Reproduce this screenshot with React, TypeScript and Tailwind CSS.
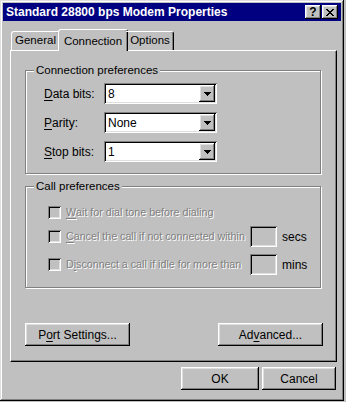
import React from "react";

const FONT = { fontFamily: '"Liberation Sans", Arial, sans-serif' };
const raised =
  "shadow-[inset_-1px_-1px_#000,inset_1px_1px_#fff,inset_-2px_-2px_#808080,inset_2px_2px_#dfdfdf]";
const sunken =
  "shadow-[inset_1px_1px_#808080,inset_-1px_-1px_#fff,inset_2px_2px_#000,inset_-2px_-2px_#dfdfdf]";
const dis = "text-[#808080] [text-shadow:1px_1px_0_#fff]";

function U({ children }: { children: React.ReactNode }) {
  return <span className="underline underline-offset-[2px] decoration-1">{children}</span>;
}

function Combo({ value }: { value: string }) {
  return (
    <div className={`w-[113px] h-[21px] bg-white ${sunken} flex items-center p-[2px]`}>
      <div className="flex-1 pl-[2px] text-[12px] text-black leading-none">{value}</div>
      <div className={`w-[16px] h-[17px] bg-[#c0c0c0] ${raised} flex items-center justify-center`}>
        <svg width="7" height="4" viewBox="0 0 7 4" shapeRendering="crispEdges">
          <path d="M0 0h7v1H0zM1 1h5v1H1zM2 2h3v1H2zM3 3h1v1H3z" fill="#000" />
        </svg>
      </div>
    </div>
  );
}

function Check({ w, children }: { w?: string; children: React.ReactNode }) {
  return (
    <div className={`flex items-center gap-[5px] h-[13px] ${w ?? ""}`}>
      <div className={`w-[13px] h-[13px] shrink-0 bg-[#c0c0c0] ${sunken}`} />
      <div className={`text-[10.7px] ${dis} flex items-center whitespace-nowrap`}>{children}</div>
    </div>
  );
}

function Btn({ w, children }: { w: string; children: React.ReactNode }) {
  return (
    <div className={`${w} h-[23px] bg-[#c0c0c0] ${raised} flex items-center justify-center text-[12px] text-black`}>
      {children}
    </div>
  );
}

function Group({ title, h, children }: { title: string; h: string; children: React.ReactNode }) {
  return (
    <div
      className={`relative w-[296px] ${h} border border-[#808080] shadow-[inset_1px_1px_#fff,1px_1px_#fff]`}
    >
      <span className="absolute left-[8px] top-[-8px] bg-[#c0c0c0] px-[2px] text-[11.5px] text-black leading-[14px]">
        {title}
      </span>
      {children}
    </div>
  );
}

export default function App() {
  return (
    <div className="w-[346px] h-[402px] bg-[#c0c0c0] select-none" style={FONT}>
      <div
        className={`w-[344px] h-[401px] bg-[#c0c0c0] p-[3px] flex flex-col shadow-[inset_-1px_-1px_#000,inset_1px_1px_#dfdfdf,inset_-2px_-2px_#808080,inset_2px_2px_#fff]`}
      >
        {/* title bar */}
        <div className="h-[18px] bg-[#000080] flex items-center pl-[3px] pr-[3px]">
          <div className="flex-1 text-white font-bold text-[12px] leading-none whitespace-nowrap">
            Standard 28800 bps Modem Properties
          </div>
          <div className={`w-[16px] h-[14px] bg-[#c0c0c0] ${raised} flex items-center justify-center text-black font-bold text-[12px] leading-none`}>
            ?
          </div>
          <div className={`ml-[1px] w-[16px] h-[14px] bg-[#c0c0c0] ${raised} flex items-center justify-center`}>
            <svg width="8" height="7" viewBox="0 0 8 7" shapeRendering="crispEdges">
              <path
                d="M0 0h2v1H0zM6 0h2v1H6zM1 1h2v1H1zM5 1h2v1H5zM2 2h4v1H2zM3 3h2v1H3zM2 4h4v1H2zM1 5h2v1H1zM5 5h2v1H5zM0 6h2v1H0zM6 6h2v1H6z"
                fill="#000"
              />
            </svg>
          </div>
        </div>

        {/* body */}
        <div className="flex flex-col pl-[7px] pt-[8px]">
          {/* tabs */}
          <div className="h-[21px] flex items-end pl-[1px] relative z-10">
            <div className="w-[49px] h-[19px] border-l border-t border-white border-r border-r-black rounded-t-[3px] shadow-[inset_-1px_0_#808080] flex items-center justify-center text-[11.5px] text-black">
              General
            </div>
            <div className="ml-[-2px] w-[70px] h-[22px] mb-[-1px] bg-[#c0c0c0] border-l border-t border-white border-r border-r-black rounded-t-[3px] shadow-[inset_-1px_0_#808080] flex items-start pt-[3px] justify-center text-[11.5px] text-black">
              Connection
            </div>
            <div className="ml-[-2px] w-[48px] h-[19px] border-t border-white border-r border-r-black rounded-tr-[3px] shadow-[inset_-1px_0_#808080] flex items-center justify-center pl-[1px] text-[11.5px] text-black">
              Options
            </div>
          </div>

          {/* panel */}
          <div
            className={`w-[327px] h-[312px] border-l border-t border-white border-r border-b border-r-black border-b-black shadow-[inset_-1px_-1px_#808080] flex flex-col pl-[14px] pt-[19px]`}
          >
            <Group title="Connection preferences" h="h-[104px]">
              <div className="flex flex-col gap-[8px] pl-[18px] pt-[12px]">
                {[
                  ["D", "ata bits:", "8"],
                  ["P", "arity:", "None"],
                  ["S", "top bits:", "1"],
                ].map(([u, rest, v]) => (
                  <div key={rest} className="flex items-center h-[21px]">
                    <div className="w-[60px] text-[12px] text-black">
                      <U>{u}</U>
                      {rest}
                    </div>
                    <Combo value={v} />
                  </div>
                ))}
              </div>
            </Group>

            <div className="h-[12px]" />

            <Group title="Call preferences" h="h-[102px]">
              <div className="flex flex-col pl-[22px] pt-[19px]">
                <Check>
                  <U>W</U>ait for dial tone before dialing
                </Check>
                <div className="flex items-center h-[21px] mt-[7px]">
                  <Check w="w-[202px]">
                    <U>C</U>ancel the call if not connected within
                  </Check>
                  <div className={`w-[27px] h-[21px] bg-[#c0c0c0] ${sunken}`} />
                  <span className="ml-[5px] text-[12px] text-black">secs</span>
                </div>
                <div className="flex items-center h-[21px] mt-[7px]">
                  <Check w="w-[202px]">
                    D<U>i</U>sconnect a call if idle for more than
                  </Check>
                  <div className={`w-[27px] h-[21px] bg-[#c0c0c0] ${sunken}`} />
                  <span className="ml-[5px] text-[12px] text-black">mins</span>
                </div>
              </div>
            </Group>

            <div className="flex justify-between w-[298px] mt-[35px]">
              <Btn w="w-[105px]">
                P<U>o</U>rt Settings...
              </Btn>
              <Btn w="w-[105px]">
                Ad<U>v</U>anced...
              </Btn>
            </div>
          </div>

          {/* bottom buttons */}
          <div className="flex justify-end gap-[3px] w-[326px] mt-[5px]">
            <Btn w="w-[78px]">OK</Btn>
            <Btn w="w-[74px]">Cancel</Btn>
          </div>
        </div>
      </div>
    </div>
  );
}
